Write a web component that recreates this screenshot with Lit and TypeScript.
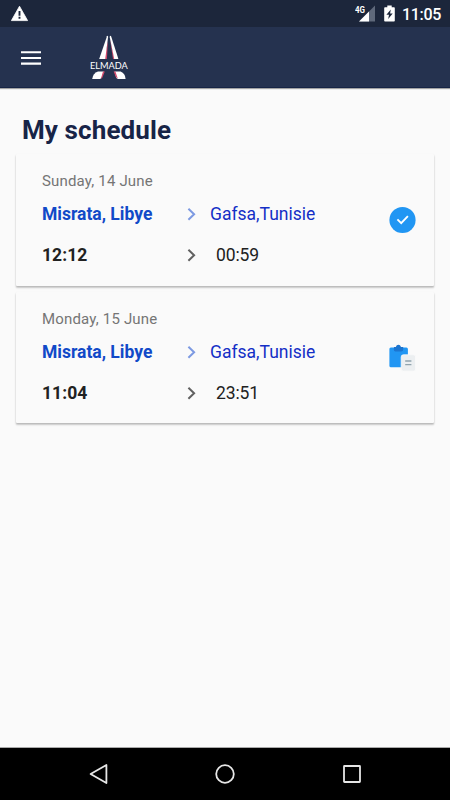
import { LitElement, html, css, svg } from "lit";
import { customElement, property } from "lit/decorators.js";

interface Trip {
  date: string;
  from: string;
  to: string;
  departs: string;
  arrives: string;
  status: "confirmed" | "pending";
}

const TRIPS: Trip[] = [
  { date: "Sunday, 14 June", from: "Misrata, Libye", to: "Gafsa,Tunisie", departs: "12:12", arrives: "00:59", status: "confirmed" },
  { date: "Monday, 15 June", from: "Misrata, Libye", to: "Gafsa,Tunisie", departs: "11:04", arrives: "23:51", status: "pending" },
];

const chevron = svg`<path d="M1.4 0.7 L7.1 6.2 L1.4 11.7" fill="none" stroke="currentColor" stroke-width="2"/>`;

@customElement("status-bar")
export class StatusBar extends LitElement {
  static styles = css`
    :host {
      display: flex;
      align-items: center;
      height: 27px;
      box-sizing: border-box;
      padding: 0 9px 0 11px;
      background: #1c263b;
      color: #fff;
      font-family: Roboto, sans-serif;
    }
    svg { display: block; flex: none; }
    .warn { margin-right: auto; }
    .signal { margin-right: 9px; }
    .net { font: 700 9.5px Roboto, sans-serif; }
    .battery { margin-right: 7px; }
    .clock { font-size: 16px; font-weight: 500; line-height: 27px; padding-top: 2px; letter-spacing: -0.3px; }
  `;
  render() {
    return html`
      <svg class="warn" width="18" height="27" viewBox="0 0 18 27">
        <path d="M8.5 6.2 L16.6 20.6 H0.4 Z" fill="#fff" stroke="#fff" stroke-width=".8" stroke-linejoin="round"/>
        <path d="M8.5 11 V15.7 M8.5 16.8 V18.8" stroke="#1c263b" stroke-width="1.9"/>
      </svg>
      <svg class="signal" width="20" height="27" viewBox="0 0 20 27">
        <path d="M20 5.5 V21.5 H4 Z" fill="#5f697b"/>
        <path d="M14 11.5 V21.5 H4 Z" fill="#fff"/>
        <text class="net" x="0" y="12.9" fill="#fff" textLength="10" lengthAdjust="spacingAndGlyphs">4G</text>
      </svg>
      <svg class="battery" width="11" height="27" viewBox="0 0 11 27">
        <path d="M3.3 5.5 H7.7 V7.2 H10 Q10.8 7.2 10.8 8 V20.8 Q10.8 21.6 10 21.6 H1 Q.2 21.6 .2 20.8 V8 Q.2 7.2 1 7.2 H3.3 Z" fill="#fff"/>
        <path d="M6.8 9.5 L2.4 14.8 H5 L4.2 19 L8.7 13.6 H6.1 Z" fill="#1c263b"/>
      </svg>
      <span class="clock">11:05</span>
    `;
  }
}

@customElement("app-header")
export class AppHeader extends LitElement {
  static styles = css`
    :host {
      display: flex;
      align-items: center;
      gap: 47px;
      height: 61px;
      box-sizing: border-box;
      padding-left: 21px;
      background: #25324f;
      border-bottom: 1px solid #162445;
      box-shadow: 0 1px 1px rgba(0, 0, 0, 0.35);
    }
    svg { display: block; overflow: visible; }
    .brand { font: 400 9.8px Lato, sans-serif; }
  `;
  render() {
    return html`
      <svg width="20" height="60" viewBox="0 0 20 60">
        <path d="M0 25.3 H20 M0 31 H20 M0 36.6 H20" stroke="#fff" stroke-width="2.1"/>
      </svg>
      <svg width="42" height="60" viewBox="-1 0 42 60">
        <path d="M18.9 14 L17.9 32 H15 Z" fill="#d34b6d"/>
        <path d="M21 12 L25.8 32 H24 Z" fill="#d34b6d"/>
        <path d="M18 9.2 Q19 8.2 19.1 10 L16.2 32 H10.2 Z" fill="#fff"/>
        <path d="M20.7 10 Q21 8.2 22.1 9.2 L29.4 32 H25.2 Z" fill="#fff"/>
        <path d="M9 44.6 H14.8 L12.6 50.8 Q12 51.9 11 51.9 H3.2 Q4 46.3 9 44.6 Z" fill="#fff"/>
        <path d="M14 44.6 H15.8 L13.4 50.4 L11.8 51.9 Z" fill="#d34b6d"/>
        <path d="M25.4 44.6 H31.6 Q36.2 46.5 36.6 51.9 H29 Q27.8 51.9 27.2 50.6 Z" fill="#fff"/>
        <path d="M24.6 44.6 H26.4 L28.8 51.4 L27 50.2 Z" fill="#d34b6d"/>
        <text class="brand" x="0.9" y="41.5" fill="#fff" textLength="37.8" lengthAdjust="spacingAndGlyphs">ELMADA</text>
      </svg>
    `;
  }
}

@customElement("trip-card")
export class TripCard extends LitElement {
  @property({ attribute: false }) trip!: Trip;

  static styles = css`
    :host {
      display: flex;
      justify-content: space-between;
      align-items: center;
      height: 132px;
      box-sizing: border-box;
      padding: 0 18px 0 26px;
      background: #fafafa;
      border-radius: 1px;
      box-shadow: 0 2px 2px rgba(0, 0, 0, 0.17), 0 1px 2px rgba(0, 0, 0, 0.14);
      font-family: Roboto, sans-serif;
    }
    .details { display: flex; flex-direction: column; align-self: flex-start; padding-top: 17px; }
    .date { font-size: 15px; line-height: 21px; color: #757575; letter-spacing: 0.17px; }
    .row { display: grid; grid-template-columns: 145px 23px auto; align-items: center; line-height: 24px; font-size: 17.5px; }
    .route { margin-top: 10px; }
    .times { margin-top: 17px; color: #212121; }
    .from { font-weight: 700; color: #1149c8; }
    .route .arrow { color: #7d9ae2; }
    .to { color: #142fc6; }
    .departs { font-weight: 700; letter-spacing: 0.05px; }
    .times .arrow { color: #616161; }
    .arrives { padding-left: 6px; letter-spacing: -0.1px; }
    svg { display: block; }
  `;

  private icon() {
    return this.trip.status === "confirmed"
      ? html`<svg width="27" height="28" viewBox="0 0 27 28">
          <circle cx="13.5" cy="14" r="13.1" fill="#2196f3"/>
          <path d="M8.4 13.4 L12.2 17.1 L18.9 10.2" fill="none" stroke="#fff" stroke-width="1.9"/>
        </svg>`
      : html`<svg width="27" height="28" viewBox="0 0 27 28">
          <path d="M1.9 3.6 H17.4 Q18.9 3.6 18.9 5.1 V23.2 H1.9 Q.4 23.2 .4 21.7 V5.1 Q.4 3.6 1.9 3.6Z" fill="#2196f3"/>
          <path d="M5 3 H6.8 Q7.5 .8 9.4 .8 Q11.3 .8 12 3 H14.2 V5.5 Q14.2 7.5 12.2 7.5 H6.5 Q4.8 7.5 4.8 5.5Z" fill="#1c75d0"/>
          <rect x="12.2" y="10.8" width="14.4" height="16.3" rx="2.2" fill="#eceff1" stroke="#fafafa" stroke-width=".8"/>
          <path d="M16.2 17 H22.4 M16.2 20.6 H22.4" stroke="#90a4ae" stroke-width="1.4"/>
        </svg>`;
  }

  render() {
    const t = this.trip;
    const arrow = html`<svg class="arrow" width="9" height="13" viewBox="0 0 9 13">${chevron}</svg>`;
    return html`
      <div class="details">
        <div class="date">${t.date}</div>
        <div class="row route"><span class="from">${t.from}</span>${arrow}<span class="to">${t.to}</span></div>
        <div class="row times"><span class="departs">${t.departs}</span>${arrow}<span class="arrives">${t.arrives}</span></div>
      </div>
      ${this.icon()}
    `;
  }
}

@customElement("nav-bar")
export class NavBar extends LitElement {
  static styles = css`
    :host {
      display: flex;
      align-items: center;
      justify-content: space-between;
      height: 53px;
      box-sizing: border-box;
      padding: 0 89px;
      background: #000;
      border-top: 1px solid #a9a9a9;
    }
    svg { display: block; fill: none; stroke: #e6e6e6; stroke-width: 1.8; }
  `;
  render() {
    return html`
      <svg width="19" height="52" viewBox="0 0 19 52"><path d="M17.4 17 V35 L1.6 26 Z" stroke-linejoin="round"/></svg>
      <svg width="20" height="52" viewBox="0 0 20 52"><circle cx="10" cy="26" r="8.8"/></svg>
      <svg width="19" height="52" viewBox="0 0 19 52"><rect x="2" y="18" width="16" height="16" rx=".5"/></svg>
    `;
  }
}

@customElement("app-root")
export class AppRoot extends LitElement {
  static styles = css`
    :host {
      display: flex;
      flex-direction: column;
      height: 100vh;
      background: #fafafa;
      font-family: Roboto, sans-serif;
    }
    main { flex: 1; min-height: 0; }
    h1 { margin: 0; padding: 26px 22px 0; height: 40px; font-size: 26px; line-height: 32px; font-weight: 700; color: #172447; letter-spacing: 0.1px; }
    .trips { display: flex; flex-direction: column; gap: 6px; padding: 0 16px; }
    trip-card + trip-card { height: 131px; }
  `;
  render() {
    return html`
      <status-bar></status-bar>
      <app-header></app-header>
      <main>
        <h1>My schedule</h1>
        <div class="trips">${TRIPS.map((t) => html`<trip-card .trip=${t}></trip-card>`)}</div>
      </main>
      <nav-bar></nav-bar>
    `;
  }
}
